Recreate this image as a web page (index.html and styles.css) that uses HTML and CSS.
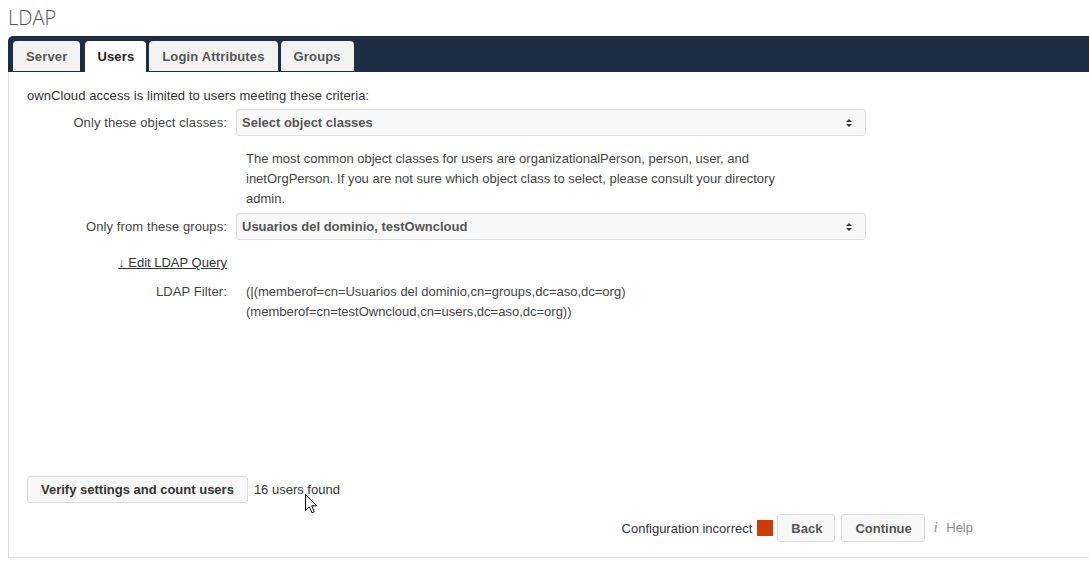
FILE: index.html
```html
<!DOCTYPE html>
<html lang="en">

<head>
    <meta charset="UTF-8">
    <meta name="viewport" content="width=device-width, initial-scale=1.0">
    <title>LDAP</title>
    <link rel="stylesheet" href="styles.css">
</head>

<body>
    <h2 class="title">LDAP</h2>
    <div class="panel">
        <ul class="tabs">
            <li class="tabs__item">Server</li>
            <li class="tabs__item tabs__item--active">Users</li>
            <li class="tabs__item">Login Attributes</li>
            <li class="tabs__item">Groups</li>
        </ul>
        <div class="tab-body">
            <p class="intro">ownCloud access is limited to users meeting these criteria:</p>

            <div class="form-row">
                <label class="form-row__label">Only these object classes:</label>
                <div class="select">
                    <span>Select object classes</span>
                    <svg class="select__arrow" width="6" height="8" viewBox="0 0 6 8">
                        <polygon points="0,3 3,0 6,3" />
                        <polygon points="0,5 3,8 6,5" />
                    </svg>
                </div>
            </div>
            <p class="hint">The most common object classes for users are organizationalPerson, person, user, and inetOrgPerson. If you are not sure which object class to select, please consult your directory admin.</p>

            <div class="form-row">
                <label class="form-row__label">Only from these groups:</label>
                <div class="select">
                    <span>Usuarios del dominio, testOwncloud</span>
                    <svg class="select__arrow" width="6" height="8" viewBox="0 0 6 8">
                        <polygon points="0,3 3,0 6,3" />
                        <polygon points="0,5 3,8 6,5" />
                    </svg>
                </div>
            </div>

            <div class="form-row form-row--link">
                <a class="edit-link" href="#">↓ Edit LDAP Query</a>
            </div>

            <div class="form-row form-row--top">
                <span class="form-row__label">LDAP Filter:</span>
                <p class="filter">(|(memberof=cn=Usuarios del dominio,cn=groups,dc=aso,dc=org)<br>(memberof=cn=testOwncloud,cn=users,dc=aso,dc=org))</p>
            </div>

            <div class="verify">
                <button class="button">Verify settings and count users</button>
                <span>16 users found</span>
            </div>

            <div class="wizard-actions">
                <span>Configuration incorrect</span>
                <span class="status status--error"></span>
                <button class="button button--nav">Back</button>
                <button class="button button--nav continue">Continue</button>
                <span class="help"><i>i</i> Help</span>
            </div>
        </div>
    </div>

    <svg class="cursor" width="13" height="20" viewBox="0 0 13 20">
        <path d="M0.5 0.5 L0.5 16.5 L4.3 12.8 L7 18.8 L9.3 17.8 L6.7 11.8 L11.8 11.8 Z" fill="#fff" stroke="#000" stroke-width="1" />
    </svg>
</body>

</html>
```

FILE: styles.css
```css
* {
    box-sizing: border-box;
}

html {
    overflow: hidden;
}

body {
    margin: 0;
    padding: 4px 0 0 8px;
    font-family: "Liberation Sans", Arial, Helvetica, sans-serif;
    font-size: 13px;
    color: #333;
    background: #fff;
}

.title {
    margin: 0;
    height: 28px;
    font-family: "Open Sans", sans-serif;
    font-weight: 300;
    font-size: 20px;
    line-height: 28px;
    color: #555;
}

.panel {
    margin: 4px -20px 0 0;
}

.tabs {
    display: flex;
    gap: 3px;
    height: 36px;
    margin: 0;
    padding: 5px 0 0 5px;
    list-style: none;
    background: #1d2d44;
    border-radius: 5px 0 0 0;
}

.tabs__item {
    height: 30px;
    padding: 0 13px;
    line-height: 31px;
    font-weight: bold;
    letter-spacing: 0.15px;
    color: #555;
    background: #f3f3f3;
    border-radius: 4px 4px 0 0;
}

.tabs__item--active {
    height: 31px;
    margin-left: 2px;
    padding: 0 12px;
    background: #fff;
    color: #222;
}

.tab-body {
    padding: 14px 0 15px 18px;
    border-left: 1px solid #ddd;
    border-bottom: 1px solid #ddd;
}

.intro {
    margin: 0;
    line-height: 20px;
    letter-spacing: 0.08px;
}

.form-row {
    display: grid;
    grid-template-columns: 200px 630px;
    column-gap: 9px;
    align-items: center;
    margin-top: 3px;
    line-height: 20px;
}

.form-row__label {
    text-align: right;
    letter-spacing: 0.1px;
    color: #444;
}

.select {
    display: flex;
    justify-content: space-between;
    align-items: center;
    height: 27px;
    padding: 0 13px 0 5px;
    border: 1px solid #ddd;
    border-radius: 3px;
    background: #f8f8f8;
    font-weight: bold;
    color: #555;
}

.select__arrow {
    fill: #333;
}

.hint {
    max-width: 545px;
    margin: 13px 0 4px 219px;
    line-height: 20px;
    color: #444;
}

.form-row--link {
    margin-top: 13px;
}

.edit-link {
    justify-self: end;
    color: #333;
    text-decoration: underline;
}

.form-row--top {
    align-items: start;
    margin-top: 9px;
}

.filter {
    margin: 0 0 0 10px;
    line-height: 20px;
    color: #444;
}

.verify {
    display: flex;
    align-items: center;
    gap: 6px;
    margin-top: 154px;
}

.button {
    height: 27px;
    padding: 0 13px;
    border: 1px solid #ddd;
    border-radius: 3px;
    background: #f8f8f8;
    font-family: "Liberation Sans", Arial, Helvetica, sans-serif;
    font-size: 13px;
    font-weight: bold;
    color: #333;
}

.wizard-actions {
    display: flex;
    justify-content: flex-end;
    align-items: center;
    max-width: 946px;
    margin-top: 11px;
}

.status {
    width: 16px;
    height: 16px;
    margin: 0 4px 0 5px;
}

.status--error {
    background: #cf3b06;
}

.button--nav {
    height: 28px;
    padding: 0 12px 0 13px;
    color: #555;
}

.continue {
    margin-left: 6px;
}

.help {
    margin-left: 9px;
    color: #888;
}

.help i {
    font-family: "Liberation Serif", serif;
    font-size: 14px;
    margin-right: 5px;
}

.cursor {
    position: absolute;
    left: 305px;
    top: 494px;
}
```
